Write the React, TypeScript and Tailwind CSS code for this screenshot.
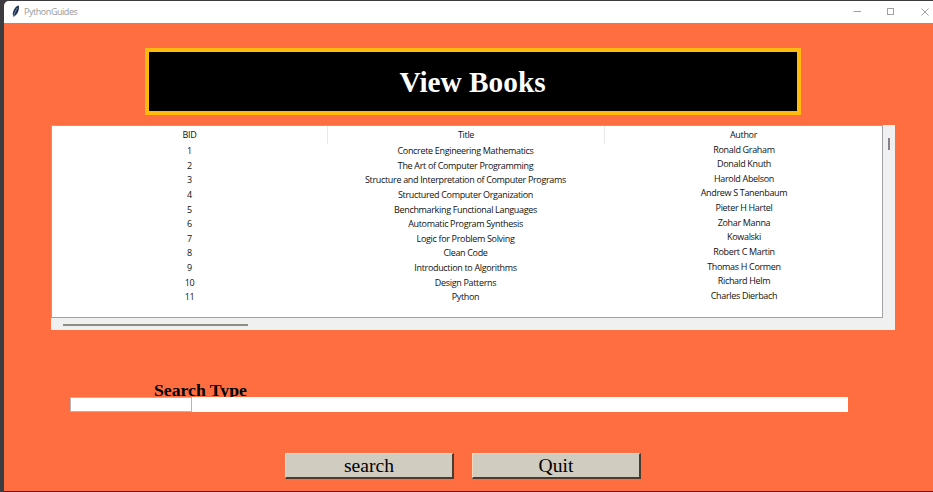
const books = [
  ['Concrete Engineering Mathematics', 'Ronald Graham'],
  ['The Art of Computer Programming', 'Donald Knuth'],
  ['Structure and Interpretation of Computer Programs', 'Harold Abelson'],
  ['Structured Computer Organization', 'Andrew S Tanenbaum'],
  ['Benchmarking Functional Languages', 'Pieter H Hartel'],
  ['Automatic Program Synthesis', 'Zohar Manna'],
  ['Logic for Problem Solving', 'Kowalski'],
  ['Clean Code', 'Robert C Martin'],
  ['Introduction to Algorithms', 'Thomas H Cormen'],
  ['Design Patterns', 'Richard Helm'],
  ['Python', 'Charles Dierbach'],
];

function TitleBar() {
  return (
    <header className="flex h-[22px] shrink-0 items-center bg-white pl-[7px] text-[#999]">
      <svg width="10" height="14" viewBox="0 0 10 14" className="-mt-px">
        <path d="M7.800 .5C4.500 1 2.200 5 1.700 9L2.500 12L5 10C7.300 7.500 8.600 3.500 7.800 .5Z" fill="#1e3354" />
        <path d="M6.300 3C4.500 5.500 3.400 8 2.600 12.300" fill="none" stroke="#a9bdd3" strokeWidth=".6" />
      </svg>
      <span className="ml-[3px] text-[9px] leading-[22px] tracking-[-0.45px]">PythonGuides</span>
      <svg width="82" height="12" viewBox="0 0 82 12" className="ml-auto mr-px" fill="none" stroke="#a0a0a0" strokeWidth="1">
        <path d="M3.500 5.500H11" />
        <rect x="37.500" y="2.500" width="6" height="6" />
        <path d="M71.500 2.500L78.500 9.500M78.500 2.500L71.500 9.500" />
      </svg>
    </header>
  );
}

function BookTable() {
  return (
    <section className="ml-[47px] mt-[10px] grid h-[205px] w-[844px] shrink-0 grid-cols-[832px_12px] grid-rows-[193px_12px] bg-[#f0f0f0] text-[9px] tracking-[-0.33px] text-[#111]">
      <div className="grid grid-cols-[276px_277px_277px] border border-[#a0a2a8] bg-white text-center">
        <div>
          <div className="h-[18px] border-r border-[#e8e8e8] leading-[17px]">BID</div>
          {books.map((b, i) => (
            <div key={b[0]} className="h-[14.65px] pr-px leading-[14.65px]">{i + 1}</div>
          ))}
        </div>
        <div>
          <div className="h-[18px] border-r border-[#e8e8e8] leading-[17px]">Title</div>
          {books.map((b) => (
            <div key={b[0]} className="h-[14.65px] whitespace-nowrap pr-[2px] leading-[14.65px]">{b[0]}</div>
          ))}
        </div>
        <div>
          <div className="h-[16.5px] leading-[17px]">Author</div>
          {books.map((b) => (
            <div key={b[0]} className="h-[14.65px] whitespace-nowrap pl-px leading-[14.65px]">{b[1]}</div>
          ))}
        </div>
      </div>
      <div className="flex pl-[5px] pt-[13px]">
        <div className="h-[12px] w-[2px] bg-[#85808a]" />
      </div>
      <div className="flex pl-[12px] pt-[6px]">
        <div className="h-[2px] w-[185px] bg-[#8a8f86]" />
      </div>
    </section>
  );
}

function Button({ label }: { label: string }) {
  return (
    <button className="h-[26px] w-[169px] border border-b-2 border-r-2 border-b-[#4a3a30] border-l-[#f3d9bd] border-r-[#4a3a30] border-t-[#f3d9bd] bg-[#d1ccc0] font-['Liberation_Serif',serif] text-[19.6px] leading-[24px] text-black">
      {label}
    </button>
  );
}

export default function App() {
  return (
    <div className="h-[492px] w-[933px] overflow-hidden bg-[#3c3b3f] pl-[4px] pt-px font-['Open_Sans',sans-serif]">
      <main className="flex h-[490px] w-[929px] flex-col overflow-hidden rounded-tl-[5px] bg-[#ff6e40]">
        <TitleBar />
        <h1 className="ml-[141px] mt-[25px] flex h-[67px] w-[656px] shrink-0 items-center justify-center border-4 border-[#ffb90f] bg-black pr-px pt-[3px] font-['Liberation_Serif',serif] text-[29.3px] font-bold leading-none text-white">
          View Books
        </h1>
        <BookTable />
        <div className="ml-[150px] mt-[51px] h-[16px] w-[120px] shrink-0 overflow-hidden whitespace-nowrap font-['Liberation_Serif',serif] text-[17.7px] font-bold leading-[19px] text-black">
          Search Type
        </div>
        <div className="ml-[66px] flex h-[15px] w-[778px] shrink-0 bg-white">
          <div className="w-[122px] border border-[#b5b5b5]" />
        </div>
        <div className="ml-[281px] mt-[41px] flex gap-[18px]">
          <Button label="search" />
          <Button label="Quit" />
        </div>
      </main>
      <div className="h-px bg-[#5c1d10]" />
    </div>
  );
}
